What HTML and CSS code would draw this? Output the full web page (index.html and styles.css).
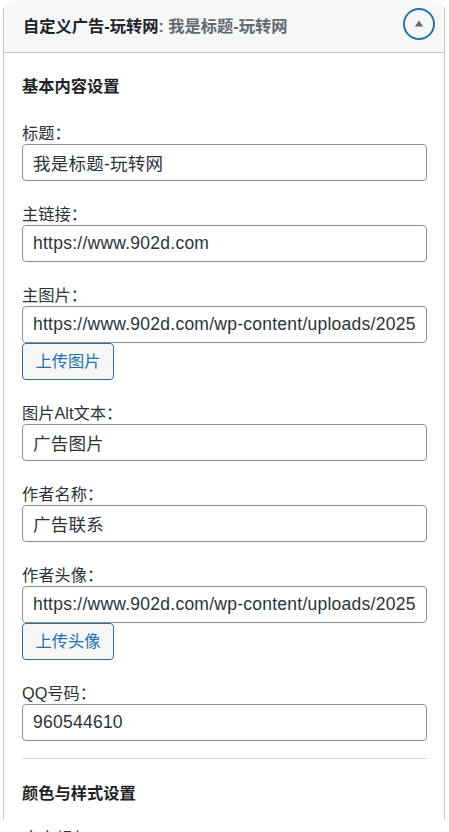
FILE: index.html
```html
<!DOCTYPE html>
<html lang="zh-CN">
<head>
<meta charset="utf-8">
<title>自定义广告-玩转网</title>
<link rel="stylesheet" href="styles.css">
</head>
<body>
<div class="frame">
  <div class="widget">
    <div class="widget-top">
      <h3 class="widget-title">自定义广告-玩转网<span class="in-title">: 我是标题-玩转网</span></h3>
      <button class="toggle" type="button" aria-label="折叠">
        <svg width="10" height="7" viewBox="0 0 10 7"><path d="M5 0.5L9.2 6.5H0.8Z" fill="#646970"/></svg>
      </button>
    </div>
    <div class="widget-inside">
      <h4 class="section-title first">基本内容设置</h4>

      <div class="field">
        <label class="label">标题：</label>
        <input class="input" type="text" value="我是标题-玩转网">
      </div>

      <div class="field">
        <label class="label">主链接：</label>
        <input class="input" type="text" value="https://www.902d.com">
      </div>

      <div class="field">
        <label class="label">主图片：</label>
        <input class="input" type="text" value="https://www.902d.com/wp-content/uploads/2025/01/ad.jpg">
        <button class="btn" type="button">上传图片</button>
      </div>

      <div class="field">
        <label class="label">图片Alt文本：</label>
        <input class="input" type="text" value="广告图片">
      </div>

      <div class="field">
        <label class="label">作者名称：</label>
        <input class="input" type="text" value="广告联系">
      </div>

      <div class="field">
        <label class="label">作者头像：</label>
        <input class="input" type="text" value="https://www.902d.com/wp-content/uploads/2025/01/avatar.jpg">
        <button class="btn" type="button">上传头像</button>
      </div>

      <div class="field last">
        <label class="label">QQ号码：</label>
        <input class="input" type="text" value="960544610">
      </div>

      <hr class="divider">

      <h4 class="section-title">颜色与样式设置</h4>
    </div>
  </div>
  <div class="after">
    <label class="label">文字颜色：</label>
  </div>
</div>
</body>
</html>
```

FILE: styles.css
```css
* { box-sizing: border-box; }

html, body {
  margin: 0;
  padding: 0;
  background: #ffffff;
}

body {
  font-family: "Liberation Sans", "Noto Sans CJK SC", sans-serif;
  color: #1d2327;
  font-size: 16.25px;
}

.frame {
  width: 449px;
  height: 832px;
  overflow: hidden;
  border-radius: 20px 20px 0 0;
  background: #ffffff;
}

.widget {
  margin: 0 4px 0 3px;
  border-left: 1px solid #c3c4c7;
  border-right: 1px solid #c3c4c7;
  background: #ffffff;
}

.widget-top {
  height: 53px;
  background: #f6f7f7;
  border-bottom: 1px solid #c3c4c7;
  display: flex;
  align-items: center;
  justify-content: space-between;
  padding: 0 9px 0 19px;
}

.widget-title {
  margin: 0;
  font-size: 16.25px;
  font-weight: bold;
  line-height: 20px;
  color: #1d2327;
  white-space: nowrap;
}

.in-title {
  color: #646970;
}

.toggle {
  width: 32px;
  height: 32px;
  margin-bottom: 4px;
  padding: 0;
  border: 2px solid #2271b1;
  border-radius: 50%;
  background: transparent;
  display: flex;
  align-items: center;
  justify-content: center;
}

.toggle svg {
  display: block;
  margin-top: -2px;
}

.widget-inside {
  padding: 0 17px 16px 18px;
}

.section-title {
  margin: 24px 0 0;
  font-size: 16.25px;
  font-weight: bold;
  line-height: 20px;
  color: #1d2327;
}

.section-title.first {
  margin: 23px 0 27px;
}

.field {
  display: flex;
  flex-direction: column;
  align-items: flex-start;
  margin-bottom: 23px;
}

.field.last {
  margin-bottom: 0;
}

.label {
  display: block;
  line-height: 20px;
  margin-bottom: 1px;
  font-size: 16.25px;
  color: #2c3338;
}

.input {
  display: block;
  width: 100%;
  height: 37px;
  margin: 0;
  padding: 0 10px;
  border: 1px solid #8c8f94;
  border-radius: 4px;
  background: #ffffff;
  font-family: "Liberation Sans", "Noto Sans CJK SC", sans-serif;
  font-size: 17.5px;
  letter-spacing: 0.25px;
  color: #2c3338;
  outline: none;
}

.btn {
  height: 37px;
  margin: 0;
  padding: 0 12.5px;
  border: 1px solid #2271b1;
  border-radius: 4px;
  background: #f6f7f7;
  color: #2271b1;
  font-family: "Liberation Sans", "Noto Sans CJK SC", sans-serif;
  font-size: 16.25px;
  line-height: 1;
}

.divider {
  margin: 17px 0 0;
  border: 0;
  border-top: 1px solid #dcdcde;
  height: 0;
}

.after {
  padding: 9px 0 0 23px;
}
```
